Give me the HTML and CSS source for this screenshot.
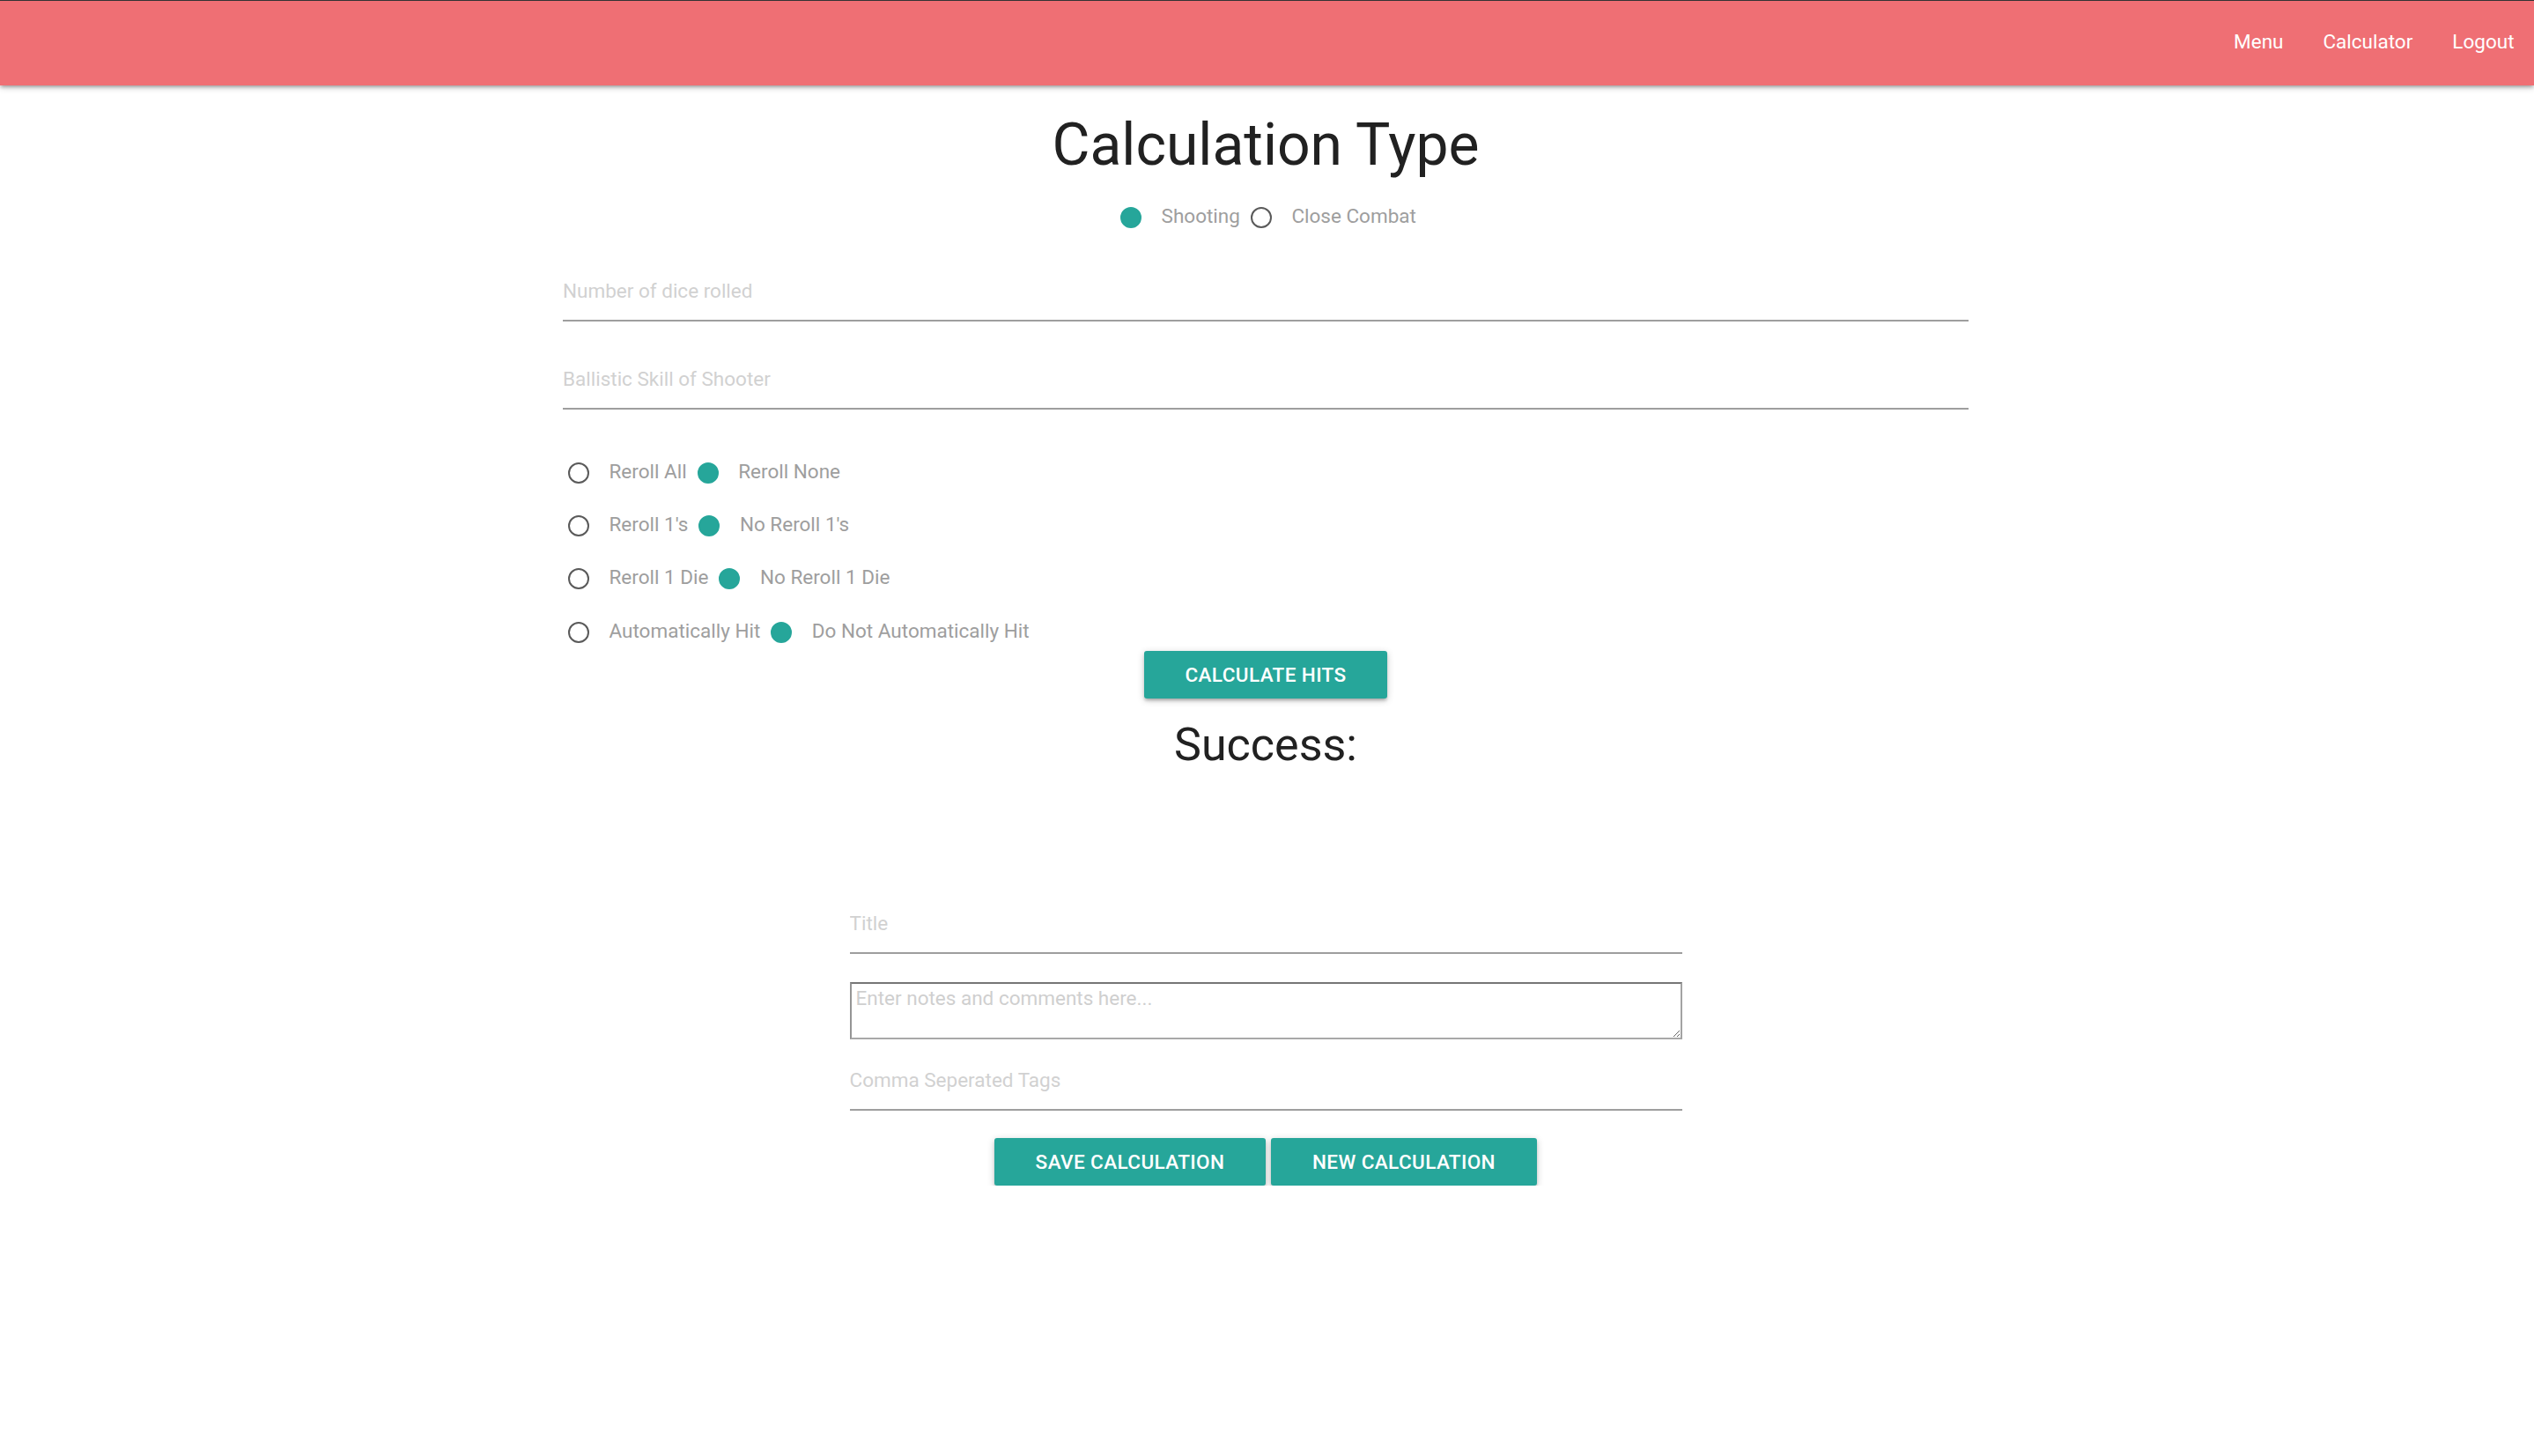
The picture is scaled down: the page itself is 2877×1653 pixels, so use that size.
FILE: index.html
```html
<!DOCTYPE html>
<html lang="en">
<head>
<meta charset="utf-8">
<title>Calculator</title>
<link rel="stylesheet" href="styles.css">
</head>
<body>
<nav class="topnav">
  <ul class="nav-links">
    <li><a href="#">Menu</a></li>
    <li><a href="#">Calculator</a></li>
    <li><a href="#">Logout</a></li>
  </ul>
</nav>
<main class="page">
  <h1 class="calc-title">Calculation Type</h1>
  <div class="radio-line">
    <label class="radio"><span class="dot checked"></span><span class="radio-text">Shooting</span></label>
    <label class="radio"><span class="dot"></span><span class="radio-text">Close Combat</span></label>
  </div>

  <section class="form-wide">
    <input class="line-input" type="text" placeholder="Number of dice rolled">
    <input class="line-input second" type="text" placeholder="Ballistic Skill of Shooter">
    <div class="options">
      <div class="radio-line left">
        <label class="radio"><span class="dot"></span><span class="radio-text">Reroll All</span></label>
        <label class="radio"><span class="dot checked"></span><span class="radio-text">Reroll None</span></label>
      </div>
      <div class="radio-line left">
        <label class="radio"><span class="dot"></span><span class="radio-text">Reroll 1's</span></label>
        <label class="radio"><span class="dot checked"></span><span class="radio-text">No Reroll 1's</span></label>
      </div>
      <div class="radio-line left">
        <label class="radio"><span class="dot"></span><span class="radio-text">Reroll 1 Die</span></label>
        <label class="radio"><span class="dot checked"></span><span class="radio-text">No Reroll 1 Die</span></label>
      </div>
      <div class="radio-line left last">
        <label class="radio"><span class="dot"></span><span class="radio-text">Automatically Hit</span></label>
        <label class="radio"><span class="dot checked"></span><span class="radio-text">Do Not Automatically Hit</span></label>
      </div>
    </div>
  </section>

  <button class="btn calc-btn" type="button">Calculate Hits</button>
  <h2 class="result-title">Success:</h2>

  <section class="form-narrow">
    <input class="line-input" type="text" placeholder="Title">
    <textarea class="notes" placeholder="Enter notes and comments here..."></textarea>
    <input class="line-input tags" type="text" placeholder="Comma Seperated Tags">
  </section>

  <div class="btn-row">
    <button class="btn save-btn" type="button">Save Calculation</button>
    <button class="btn new-btn" type="button">New Calculation</button>
  </div>
</main>
</body>
</html>
```
FILE: styles.css
```css
html, body {
  margin: 0;
  padding: 0;
  background: #ffffff;
}

body {
  font-family: Roboto, "Liberation Sans", Arial, sans-serif;
  color: rgba(0, 0, 0, 0.87);
}

.topnav {
  border-top: 1px solid #333333;
  height: 96px;
  background: #ef6f74;
  display: flex;
  justify-content: flex-end;
  box-shadow: 0 3px 3px 0 rgba(0, 0, 0, 0.14), 0 4px 2px -3px rgba(0, 0, 0, 0.12), 0 2px 8px 0 rgba(0, 0, 0, 0.2);
  position: relative;
  z-index: 2;
}

.nav-links {
  list-style: none;
  margin: 0;
  padding: 0;
  display: flex;
}

.nav-links a {
  display: block;
  padding: 0 22.5px 3px;
  line-height: 93px;
  font-size: 22.5px;
  color: #ffffff;
  text-decoration: none;
}

.page {
  display: flex;
  flex-direction: column;
  align-items: center;
  padding-right: 3px;
}

.calc-title {
  margin: 31.5px 0 0;
  font-size: 66px;
  line-height: 72px;
  font-weight: 400;
  color: #212121;
}

.radio-line {
  display: flex;
  gap: 6px;
  margin-top: 26.5px;
  height: 37.5px;
}

.radio {
  display: inline-flex;
  align-items: flex-start;
  height: 37.5px;
  cursor: pointer;
}

.dot {
  box-sizing: border-box;
  width: 24px;
  height: 24px;
  margin: 8px 22.5px 0 6px;
  border-radius: 50%;
  border: 2px solid #5a5a5a;
  flex: none;
}

.dot.checked {
  border-color: #26a69a;
  background: #26a69a;
}

.radio-text {
  font-size: 22.5px;
  line-height: 37.5px;
  color: #9e9e9e;
}

.form-wide {
  width: 1596px;
  margin-top: 32.5px;
  display: flex;
  flex-direction: column;
}

.line-input {
  box-sizing: content-box;
  display: block;
  width: 100%;
  height: 66px;
  margin: 0;
  padding: 0;
  border: none;
  border-bottom: 2px solid #9e9e9e;
  outline: none;
  background: transparent;
  font-family: Roboto, "Liberation Sans", Arial, sans-serif;
  font-size: 22.5px;
  color: #212121;
}

.line-input::placeholder {
  color: #d1d1d1;
}

.line-input.second {
  margin-top: 32px;
}

.options {
  margin-top: 51.5px;
  display: flex;
  flex-direction: column;
  gap: 22.5px;
}

.options .radio-line {
  margin-top: 0;
}

.options .radio-line.last {
  margin-top: 1px;
}

.btn {
  border: none;
  border-radius: 3px;
  height: 54px;
  padding: 0 40px;
  background: #26a69a;
  color: #ffffff;
  font-family: Roboto, "Liberation Sans", Arial, sans-serif;
  font-size: 22.5px;
  font-weight: 500;
  letter-spacing: 0.4px;
  text-transform: uppercase;
  line-height: 54px;
  white-space: nowrap;
  box-shadow: 0 3px 3px 0 rgba(0, 0, 0, 0.14), 0 4px 2px -3px rgba(0, 0, 0, 0.12), 0 2px 8px 0 rgba(0, 0, 0, 0.2);
  cursor: pointer;
}

.calc-btn {
  margin-top: 4px;
  width: 276px;
}

.result-title {
  margin: 23.75px 0 0;
  font-size: 52px;
  line-height: 57px;
  font-weight: 400;
  color: #212121;
}

.form-narrow {
  width: 945px;
  margin-top: 141px;
  display: flex;
  flex-direction: column;
}

.notes {
  box-sizing: border-box;
  display: block;
  width: 100%;
  height: 65px;
  margin-top: 32px;
  padding: 3px 5px;
  border-style: solid;
  border-width: 2px;
  border-color: #767676 #a3a3a3 #a8a8a8 #959595;
  font-family: Roboto, "Liberation Sans", Arial, sans-serif;
  font-size: 22.5px;
  line-height: 26px;
  outline: none;
}

.notes::placeholder {
  color: #cfcfcf;
}

.line-input.tags {
  margin-top: 13px;
}

.btn-row {
  margin-top: 31px;
  display: flex;
  gap: 6px;
}

.save-btn {
  width: 308px;
}

.new-btn {
  width: 302px;
}
```
